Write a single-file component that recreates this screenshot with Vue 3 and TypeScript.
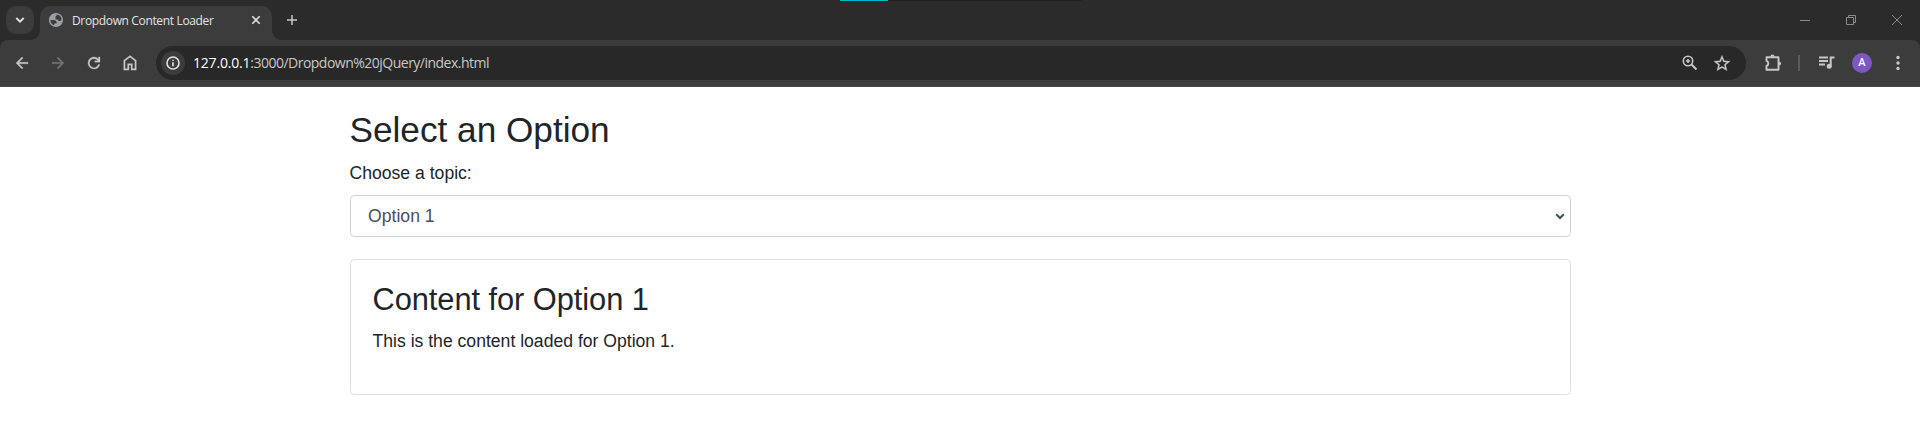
<script setup lang="ts">
import { ref, computed } from 'vue'

const options: string[] = ['Option 1', 'Option 2', 'Option 3']
const selected = ref<string>('Option 1')
const body = computed<string>(() => `This is the content loaded for ${selected.value}.`)
</script>

<template>
  <div class="window">
    <header class="tabstrip">
      <div class="loadbar"><div class="loaded"></div></div>
      <button class="tabsearch" aria-label="Search tabs">
        <svg width="10" height="8" viewBox="0 0 10 8"><path d="M1.300 2 5 5.700 8.700 2" fill="none" stroke="#e0e0e0" stroke-width="1.9" /></svg>
      </button>
      <div class="tab">
        <svg class="globe" width="14" height="14" viewBox="2 2 20 20"><path fill="#9aa0a6" d="M12 2C6.480 2 2 6.480 2 12s4.480 10 10 10 10-4.480 10-10S17.520 2 12 2zM4 12h4.400c3.410.020 4.900 1.730 4.450 5.150H9.500v2.450A8.010 8.010 0 0 1 4 12zm15.940-1c-.5 2.200-1.800 2.500-2.940 2.500-1.300 0-2.200-.8-2.200-2.300h-3.500V7.500c0-1 .9-1.900 1.900-1.900V4.100A8 8 0 0 1 19.940 11z" /></svg>
        <span class="title">Dropdown Content Loader</span>
        <svg class="tabclose" width="10" height="10" viewBox="0 0 10 10"><path d="M1.300 1.300 8.700 8.700M8.700 1.300 1.300 8.700" stroke="#dedede" stroke-width="1.600" /></svg>
      </div>
      <svg class="newtab" width="12" height="12" viewBox="0 0 12 12"><path d="M6 1v10M1 6h10" stroke="#c7c7c7" stroke-width="1.500" /></svg>
      <div class="winbuttons">
        <svg width="12" height="12" viewBox="0 0 12 12"><path d="M1 6.500h10" stroke="#8a8a8a" /></svg>
        <svg width="12" height="12" viewBox="0 0 12 12"><path d="M1.500 3.500h7v7h-7zM3.500 3.500v-2h7v7h-2" fill="none" stroke="#8a8a8a" /></svg>
        <svg width="12" height="12" viewBox="0 0 12 12"><path d="M1 1l10 10M11 1 1 11" stroke="#8a8a8a" /></svg>
      </div>
    </header>

    <nav class="toolbar">
      <div class="nav">
        <svg width="18" height="18" viewBox="0 0 24 24" fill="#c7c7c7" stroke="#c7c7c7" stroke-width=".4"><path d="M20 11H7.830l5.590-5.590L12 4l-8 8 8 8 1.410-1.410L7.830 13H20z" /></svg>
        <svg width="18" height="18" viewBox="0 0 24 24" fill="#757575" stroke="#757575" stroke-width=".4"><path d="m12 4-1.410 1.410L16.170 11H4v2h12.170l-5.580 5.590L12 20l8-8z" /></svg>
        <svg width="18" height="18" viewBox="0 0 24 24" fill="#c7c7c7" stroke="#c7c7c7" stroke-width=".4"><path d="M12 20a8 8 0 1 1 5.900-13.400V4H20v7h-7V9h4a6 6 0 1 0 .7 5h2.050A8 8 0 0 1 12 20z" /></svg>
        <svg width="18" height="18" viewBox="1.500 2 21 21"><path d="M5.500 20V9.700L12 4.700l6.500 5V20H14v-6h-4v6z" fill="none" stroke="#c7c7c7" stroke-width="2" /></svg>
      </div>
      <div class="omnibox">
        <span class="info"><svg width="14" height="14" viewBox="0 0 14 14"><circle cx="7" cy="7" r="6" fill="none" stroke="#e3e3e3" stroke-width="1.600" /><path d="M7 6.200v4M7 3.700v1.400" stroke="#e3e3e3" stroke-width="1.600" /></svg></span>
        <span class="url"><b>127.0.0.1</b>:3000/Dropdown%20jQuery/index.html</span>
        <svg class="magnify" width="16" height="16" viewBox="0 0 16 16" fill="none" stroke="#c7c7c7"><circle cx="6" cy="6" r="4.700" stroke-width="1.600" /><path d="M9.300 9.300 14.500 14.500" stroke-width="2" /><path d="M6 3.900v4.200M3.900 6h4.200" stroke-width="1.600" /></svg>
        <svg class="star" width="18" height="18" viewBox="1 .5 22 22" fill="#c7c7c7" stroke="#c7c7c7" stroke-width=".3"><path d="m22 9.240-7.190-.620L12 2 9.190 8.630 2 9.240l5.460 4.730L5.820 21 12 17.270 18.180 21l-1.630-7.030L22 9.240zM12 15.400l-3.760 2.270 1-4.280-3.320-2.880 4.380-.380L12 6.100l1.710 4.040 4.380.380-3.320 2.880 1 4.280L12 15.400z" /></svg>
      </div>
      <svg class="puzzle" width="18" height="18" viewBox="0 0 18 18"><path d="M2.500 3.200H14.500V15.700H2.500V12a2.700 2.700 0 0 0 0-5.100z" fill="none" stroke="#c7c7c7" stroke-width="1.900" stroke-linejoin="round" /><path d="M6.300 2.700a2.100 2.100 0 0 1 4.200 0zM15 7.400a2.100 2.100 0 0 1 0 4.200z" fill="#c7c7c7" /></svg>
      <i class="divider"></i>
      <svg class="media" width="18" height="16" viewBox="0 0 18 16"><path d="M1 2.500h9M1 6h9M1 9.500h6" stroke="#c7c7c7" stroke-width="1.800" /><path d="M12.700 11.500V2.500H16.500" fill="none" stroke="#c7c7c7" stroke-width="2" /><circle cx="11.200" cy="11.300" r="2.500" fill="#c7c7c7" /></svg>
      <span class="avatar">A</span>
      <svg class="more" width="4" height="16" viewBox="0 0 4 16" fill="#c7c7c7"><circle cx="2" cy="2.500" r="1.700" /><circle cx="2" cy="8" r="1.700" /><circle cx="2" cy="13.500" r="1.700" /></svg>
    </nav>

    <main class="page">
      <div class="container">
        <h2>Select an Option</h2>
        <label for="topic">Choose a topic:</label>
        <div class="field">
          <select id="topic" v-model="selected">
            <option v-for="o in options" :key="o">{{ o }}</option>
          </select>
          <svg class="chevron" width="10" height="7" viewBox="0 0 10 7"><path d="M1.200 1.300 5 5 8.800 1.300" fill="none" stroke="#495057" stroke-width="2.100" /></svg>
        </div>
        <section class="content">
          <h3>Content for {{ selected }}</h3>
          <p>{{ body }}</p>
        </section>
      </div>
    </main>
  </div>
</template>

<style>
body { margin: 0; background: #fff; }
</style>

<style scoped>
* { box-sizing: border-box; }
svg { display: block; flex: none; }
.window { width: 1920px; height: 443px; overflow: hidden; font-family: "Liberation Sans", Arial, sans-serif; background: linear-gradient(#2b2b2b 60px, #fff 60px); }
.tabstrip { position: relative; z-index: 1; height: 40px; display: flex; background: #2b2b2b; padding-left: 6px; }
.loadbar { position: absolute; left: 840px; top: 0; width: 241px; height: 1px; background: #1f1f1f; }
.loaded { width: 48px; height: 1px; background: #00b7c3; }
.tabsearch { width: 28px; height: 28px; margin-top: 6px; border: 0; border-radius: 10px; background: #3c3c3c; display: flex; align-items: center; justify-content: center; padding: 0; }
.tab { position: relative; width: 232px; height: 34px; margin: 6px 0 0 6px; border-radius: 10px 10px 0 0; background: #3c3c3c; display: flex; align-items: center; padding: 0 11px 6px 9px; }
.tab::before, .tab::after { content: ""; position: absolute; bottom: 0; width: 10px; height: 10px; }
.tab::before { left: -10px; background: radial-gradient(circle at 0 0, transparent 9.5px, #3c3c3c 10.5px); }
.tab::after { right: -10px; background: radial-gradient(circle at 100% 0, transparent 9.5px, #3c3c3c 10.5px); }
.title { margin-left: 9px; padding-top: 1px; font: 12px/16px "Open Sans", "Noto Sans", sans-serif; letter-spacing: -0.35px; color: #e3e3e3; white-space: nowrap; }
.tabclose { margin-left: auto; }
.newtab { margin: 14px 0 0 14px; }
.winbuttons { margin: 14px 17px 0 auto; display: flex; gap: 34px; }
.toolbar { height: 47px; display: flex; align-items: center; background: #3c3c3c; border-radius: 8px 8px 0 0; border-bottom: 1px solid #484848; padding: 0 20px 0 13px; }
.nav { display: flex; gap: 18px; }
.omnibox { width: 1590px; height: 34px; margin-left: 17px; border-radius: 17px; background: #282828; display: flex; align-items: center; padding: 0 15px 0 5px; }
.info { width: 24px; height: 24px; border-radius: 12px; background: #3c3c3c; display: flex; align-items: center; justify-content: center; }
.url { margin-left: 8px; font: 14px/20px "Open Sans", "Noto Sans", sans-serif; color: #c7c7c7; letter-spacing: -0.51px; white-space: nowrap; }
.url b { font-weight: 400; letter-spacing: -0.2px; color: #fff; }
.magnify { margin-left: auto; }
.star { margin-left: 15px; }
.puzzle { margin-left: 18px; }
.divider { width: 2px; height: 16px; margin-left: 16px; background: #5b5b5b; }
.media { margin-left: 18px; }
.avatar { width: 20px; height: 20px; margin-left: 16px; border-radius: 10px; background: #7e57c2; color: #fff; font: 500 11px/20px Roboto, sans-serif; text-align: center; }
.more { margin-left: 24px; }
.page { background: #fff; height: 356px; padding-top: 22px; color: #212529; font-size: 17.6px; line-height: 26.4px; }
.container { width: 1221px; margin: 0 auto; }
h2, h3 { margin: 0 0 8.8px; font-weight: 400; line-height: 1.2; }
h2 { font-size: 35.2px; }
h3 { font-size: 30.8px; letter-spacing: -0.05px; }
label { display: block; margin-bottom: 8.8px; }
.field { position: relative; height: 41.8px; }
select { appearance: none; display: block; width: 100%; height: 41.8px; padding: 6.6px 17.6px; border: 1px solid #ced4da; border-radius: 4.4px; background: #fff; color: #495057; font: 17.6px/26.4px "Liberation Sans", Arial, sans-serif; }
.chevron { position: absolute; right: 6px; top: 18px; }
.content { margin-top: 22px; height: 136px; padding: 22px; border: 1px solid #dedede; border-radius: 4.4px; }
p { margin: 0; }
</style>
